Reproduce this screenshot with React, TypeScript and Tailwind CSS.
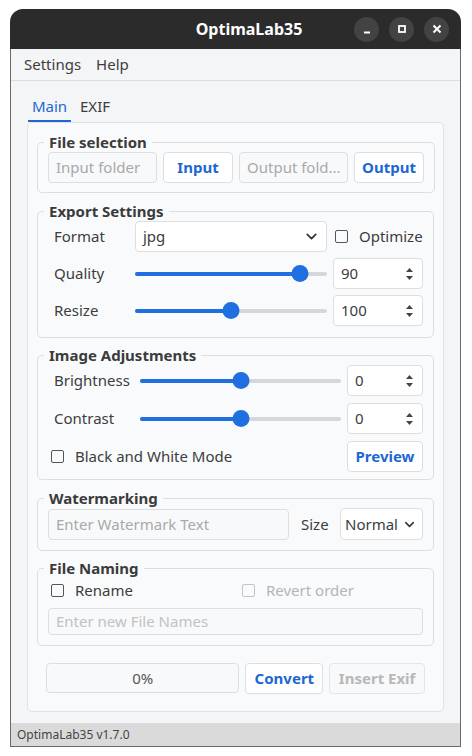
import { ChevronDown } from "lucide-react";

const font = { fontFamily: '"Noto Sans", "Open Sans", sans-serif' };

function GroupBox({ title, children, className = "" }: { title: string; children: React.ReactNode; className?: string }) {
  return (
    <fieldset className={`border border-[#dcdee0] rounded-[5px] px-[10px] ${className}`}>
      <legend className="ml-[-4px] px-[5px] text-[15px] leading-[20px] font-bold text-[#3b3b3b]">{title}</legend>
      {children}
    </fieldset>
  );
}

function TextBox({ placeholder, className = "" }: { placeholder: string; className?: string }) {
  return (
    <div className={`h-[31px] border border-[#dcdee0] rounded-[4px] bg-[#f8f9fa] flex items-center px-[7px] text-[15px] text-[#a9a9a9] whitespace-nowrap overflow-hidden ${className}`}>
      {placeholder}
    </div>
  );
}

function Button({ label, className = "", disabled = false }: { label: string; className?: string; disabled?: boolean }) {
  return (
    <div
      className={`h-[31px] border rounded-[4px] flex items-center justify-center text-[15px] font-bold ${
        disabled ? "border-[#e4e5e7] bg-[#f8f9fa] text-[#b8b8b8]" : "border-[#dcdee0] bg-white text-[#1d67d3]"
      } ${className}`}
    >
      {label}
    </div>
  );
}

function Slider({ pct }: { pct: number }) {
  return (
    <div className="relative h-[18px] flex items-center flex-1">
      <div className="h-[4px] w-full bg-[#d6d7d9] rounded-full" />
      <div className="absolute left-0 h-[4px] bg-[#1f6fe0] rounded-full" style={{ width: `${pct}%` }} />
      <div
        className="absolute w-[17px] h-[17px] rounded-full bg-[#1f6fe0] -translate-x-1/2"
        style={{ left: `${pct}%` }}
      />
    </div>
  );
}

function SpinBox({ value, className = "" }: { value: string; className?: string }) {
  return (
    <div className={`h-[31px] border border-[#dcdee0] rounded-[4px] bg-white flex items-center justify-between pl-[7px] pr-[8px] text-[15px] text-[#3d3d3d] ${className}`}>
      <span>{value}</span>
      <svg width="9" height="14" viewBox="0 0 9 14">
        <path d="M4.5 1 L8 5 L1 5 Z" fill="#444" />
        <path d="M1 9 L8 9 L4.5 13 Z" fill="#444" />
      </svg>
    </div>
  );
}

function CheckBox({ label, disabled = false }: { label: string; disabled?: boolean }) {
  return (
    <div className={`flex items-center gap-[11px] text-[15px] ${disabled ? "text-[#b5b5b5]" : "text-[#3d3d3d]"}`}>
      <div className={`w-[13px] h-[13px] border-[1.5px] rounded-[2px] ${disabled ? "border-[#c4c4c4]" : "border-[#555]"}`} />
      <span>{label}</span>
    </div>
  );
}

function WinButton({ children }: { children: React.ReactNode }) {
  return <div className="w-[25px] h-[25px] rounded-full bg-[#434343] flex items-center justify-center">{children}</div>;
}

export default function App() {
  return (
    <div className="w-[472px] h-[756px] bg-white pt-[9px] pl-[10px]" style={font}>
      <div className="w-[451px] h-[738px] flex flex-col">
        {/* Title bar */}
        <div className="h-[40px] bg-[#2b2b2b] rounded-t-[13px] flex items-center">
          <div className="flex-1 flex justify-center pl-[134px] text-white font-bold text-[16px]">OptimaLab35</div>
          <div className="flex items-center gap-[10px] pr-[12px]">
            <WinButton>
              <svg width="10" height="10" viewBox="0 0 10 10"><path d="M2 8.5 H8" stroke="white" strokeWidth="2" /></svg>
            </WinButton>
            <WinButton>
              <svg width="10" height="10" viewBox="0 0 10 10"><rect x="2" y="2" width="6" height="6" stroke="white" strokeWidth="1.8" fill="none" /></svg>
            </WinButton>
            <WinButton>
              <svg width="10" height="10" viewBox="0 0 10 10"><path d="M1.5 1.5 L8.5 8.5 M8.5 1.5 L1.5 8.5" stroke="white" strokeWidth="2" /></svg>
            </WinButton>
          </div>
        </div>

        <div className="flex-1 flex flex-col bg-[#f4f5f6] border-x border-b border-[#6b6b6b]">
          {/* Menu bar */}
          <div className="h-[32px] flex items-center gap-[15px] px-[13px] text-[15px] text-[#3d3d3d] border-b border-[#dcdcdc]">
            <span>Settings</span>
            <span>Help</span>
          </div>

          {/* Tabs */}
          <div className="flex items-end h-[41px] px-[17px]">
            <div className="flex flex-col items-center w-[43px]">
              <span className="text-[15px] text-[#1d67d3] leading-[20px]">Main</span>
              <div className="h-[2px] w-full bg-[#1d67d3] mt-[4px]" />
            </div>
            <span className="text-[15px] text-[#3d3d3d] leading-[20px] ml-[9px] mb-[6px]">EXIF</span>
          </div>

          {/* Tab panel */}
          <div className="mx-[16px] h-[590px] border border-[#dfe1e3] rounded-[5px] bg-[#f9fafb] px-[9px] pt-[9px] flex flex-col">
            <GroupBox title="File selection" className="pb-[9px]">
              <div className="flex gap-[6px]">
                <TextBox placeholder="Input folder" className="w-[109px]" />
                <Button label="Input" className="w-[70px]" />
                <TextBox placeholder="Output fold..." className="w-[109px]" />
                <Button label="Output" className="w-[70px]" />
              </div>
            </GroupBox>

            <GroupBox title="Export Settings" className="mt-[8px] pb-[11px]">
              <div className="flex flex-col gap-[6px] text-[15px] text-[#3d3d3d]">
                <div className="flex items-center h-[31px]">
                  <span className="w-[87px] pl-[6px]">Format</span>
                  <div className="w-[192px] h-[31px] border border-[#dcdee0] rounded-[4px] bg-white flex items-center justify-between pl-[7px] pr-[6px]">
                    <span>jpg</span>
                    <ChevronDown size={17} strokeWidth={2.4} color="#333" />
                  </div>
                  <div className="ml-[8px]">
                    <CheckBox label="Optimize" />
                  </div>
                </div>
                <div className="flex items-center h-[31px]">
                  <span className="w-[87px] pl-[6px]">Quality</span>
                  <div className="w-[192px] flex"><Slider pct={86} /></div>
                  <SpinBox value="90" className="ml-[6px] w-[90px]" />
                </div>
                <div className="flex items-center h-[31px]">
                  <span className="w-[87px] pl-[6px]">Resize</span>
                  <div className="w-[192px] flex"><Slider pct={50} /></div>
                  <SpinBox value="100" className="ml-[6px] w-[90px]" />
                </div>
              </div>
            </GroupBox>

            <GroupBox title="Image Adjustments" className="mt-[7px] pb-[7px]">
              <div className="flex flex-col gap-[7px] text-[15px] text-[#3d3d3d]">
                <div className="flex items-center h-[31px]">
                  <span className="w-[92px] pl-[6px]">Brightness</span>
                  <div className="w-[201px] flex"><Slider pct={50} /></div>
                  <SpinBox value="0" className="ml-[6px] w-[76px]" />
                </div>
                <div className="flex items-center h-[31px]">
                  <span className="w-[92px] pl-[6px]">Contrast</span>
                  <div className="w-[201px] flex"><Slider pct={50} /></div>
                  <SpinBox value="0" className="ml-[6px] w-[76px]" />
                </div>
                <div className="flex items-center justify-between h-[31px] pl-[3px]">
                  <CheckBox label="Black and White Mode" />
                  <Button label="Preview" className="w-[76px]" />
                </div>
              </div>
            </GroupBox>

            <GroupBox title="Watermarking" className="mt-[8px] pb-[10px]">
              <div className="flex items-center text-[15px] text-[#3d3d3d]">
                <TextBox placeholder="Enter Watermark Text" className="w-[241px]" />
                <span className="ml-[12px]">Size</span>
                <div className="ml-auto w-[83px] h-[32px] border border-[#dcdee0] rounded-[4px] bg-white flex items-center justify-between pl-[4px] pr-[5px]">
                  <span>Normal</span>
                  <ChevronDown size={15} strokeWidth={2.4} color="#333" />
                </div>
              </div>
            </GroupBox>

            <GroupBox title="File Naming" className="mt-[7px] pb-[10px]">
              <div className="flex items-center h-[24px] pl-[3px]">
                <div className="w-[191px]"><CheckBox label="Rename" /></div>
                <CheckBox label="Revert order" disabled />
              </div>
              <div className="mt-[6px] h-[27px] border border-[#dcdee0] rounded-[4px] bg-[#f8f9fa] flex items-center px-[7px] text-[15px] text-[#c2c2c2]">
                Enter new File Names
              </div>
            </GroupBox>

            <div className="flex gap-[6px] px-[9px] mt-[17px]">
              <div className="w-[194px] h-[30px] border border-[#dcdee0] rounded-[4px] bg-[#f8f9fa] flex items-center justify-center text-[15px] text-[#555]">
                0%
              </div>
              <Button label="Convert" className="w-[78px] h-[30px]" />
              <Button label="Insert Exif" disabled className="w-[96px] h-[30px]" />
            </div>
          </div>

          {/* Status bar */}
          <div className="mt-auto h-[23px] bg-[#dadada] flex items-center px-[6px] text-[12px] text-[#444]">
            OptimaLab35 v1.7.0
          </div>
        </div>
      </div>
    </div>
  );
}
